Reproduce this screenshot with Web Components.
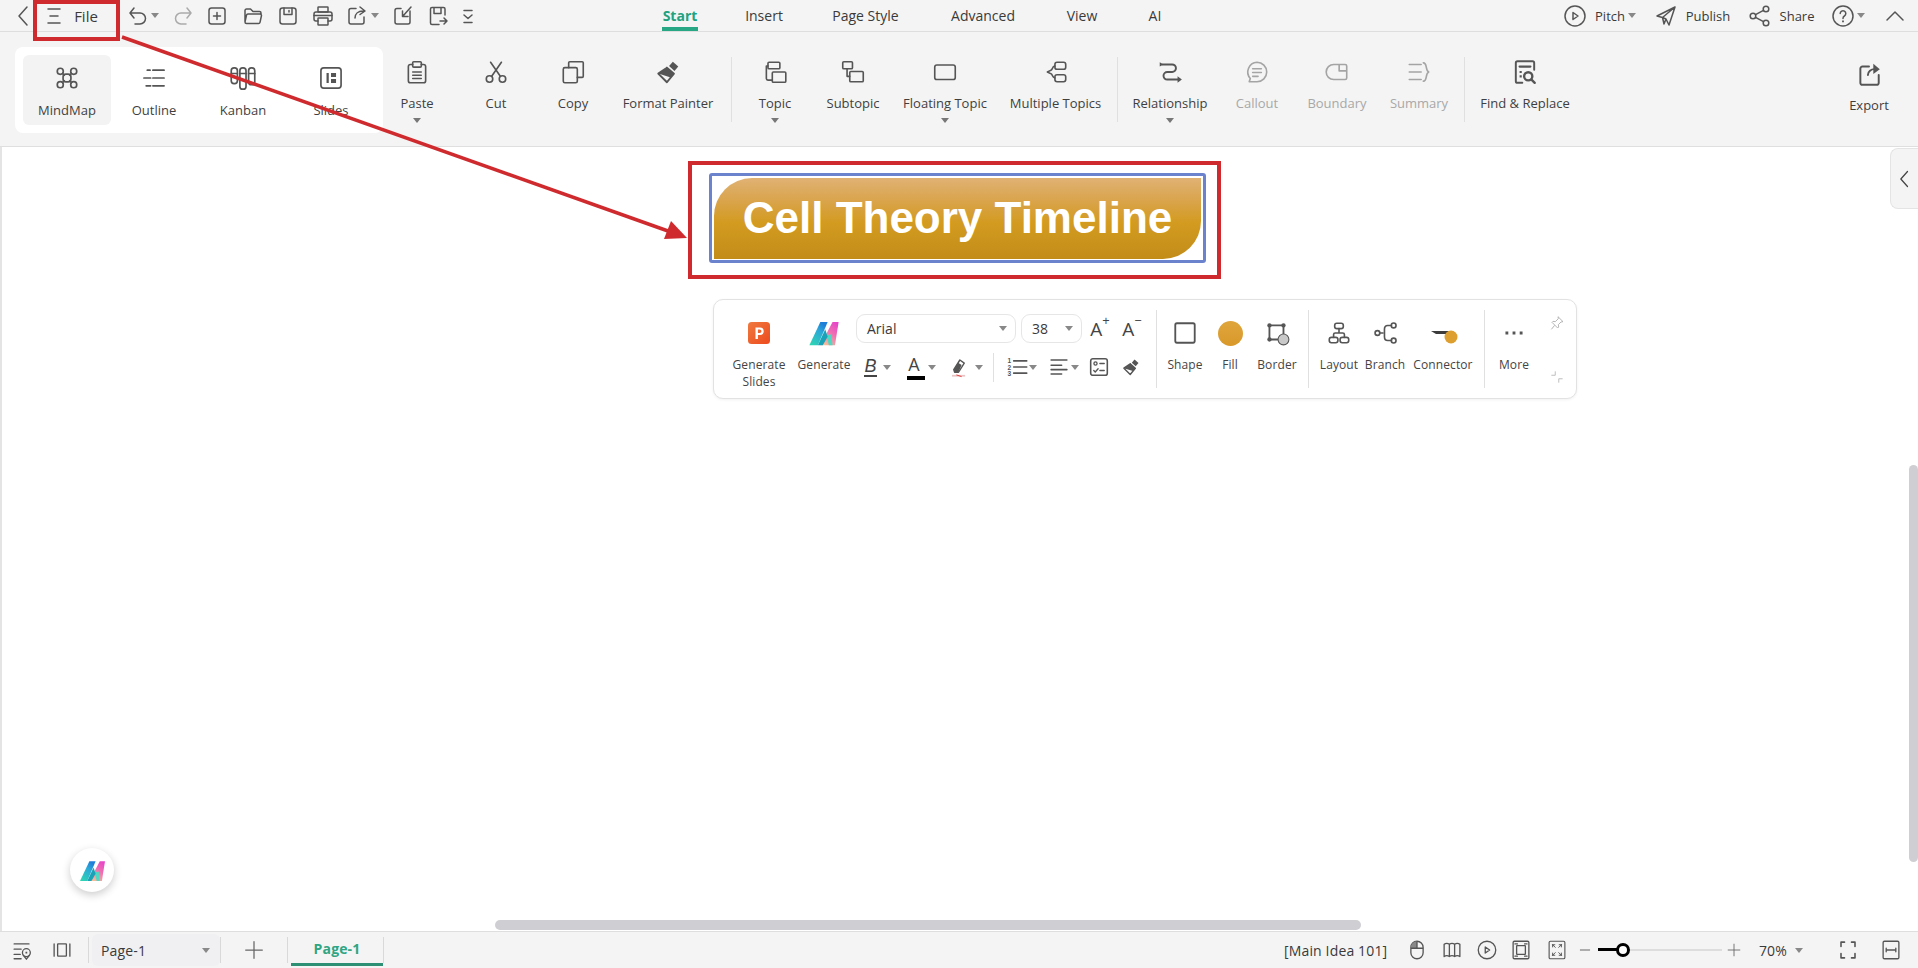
<![CDATA[<!DOCTYPE html>
<html lang="en"><head><meta charset="utf-8"><title>Cell Theory Timeline</title>
<style>
html,body{margin:0;height:100%;overflow:hidden;background:#f4f4f4}
body{font:13px "Open Sans","Noto Sans",sans-serif;color:#3a3a3a}
</style></head><body>
<app-shell></app-shell>
<script>
const L=(d,w=1.5)=>`<path d="${d}" fill="none" stroke="currentColor" stroke-width="${w}" stroke-linecap="round" stroke-linejoin="round"/>`;
const R=(x,y,w,h,r=1.5,sw=1.5)=>`<rect x="${x}" y="${y}" width="${w}" height="${h}" rx="${r}" fill="none" stroke="currentColor" stroke-width="${sw}"/>`;
const C=(x,y,r,sw=1.5)=>`<circle cx="${x}" cy="${y}" r="${r}" fill="none" stroke="currentColor" stroke-width="${sw}"/>`;
const F=(d)=>`<path d="${d}" fill="currentColor"/>`;
const ICONS={
chevL:L('M15 3L7 12l8 9'),chevU:L('M4 16l8-8 8 8'),
menu:L('M6 5h12M8 12h8M6 19h12'),
undo:L('M8 4L4 9l4 5M4 9h10a5.5 5.5 0 0 1 0 11H9'),
redo:L('M16 4l4 5-4 5M20 9H10a5.5 5.5 0 0 0 0 11h5'),
newf:R(4,4,16,16,2.5)+L('M12 8.5v7M8.5 12h7'),
open:L('M4 18V6.500A1.500 1.500 0 0 1 5.500 5h4L12 7.500h6.500A1.500 1.500 0 0 1 20 9v1M4 18a1.500 1.500 0 0 0 1.500 1.500h12a1.500 1.500 0 0 0 1.500-1.200l1.500-6.800a1.500 1.500 0 0 0-1.500-1.500H7a1.500 1.500 0 0 0-1.500 1.200z'),
save:R(4,4,16,16,2.500)+L('M8 4v6.500h8V4M13 6.500v1.500'),
print:R(7,3,10,5,.5)+L('M7 17H5a2 2 0 0 1-2-2v-5a2 2 0 0 1 2-2h14a2 2 0 0 1 2 2v5a2 2 0 0 1-2 2h-2')+R(7,14,10,7,.5)+L('M3 11.500h18'),
shareout:L('M11 4.500H6a2 2 0 0 0-2 2V18a2 2 0 0 0 2 2h11a2 2 0 0 0 2-2v-5M10 14c0-4 3-7 8-7M15 3l5 4-5 3.500'),
importf:L('M10 4.500H6a2 2 0 0 0-2 2V18a2 2 0 0 0 2 2h11a2 2 0 0 0 2-2V7M20 3l-8 9M11.500 7v5.500H17'),
saveas:L('M19 11V5a1.500 1.500 0 0 0-1.500-1.500H6A1.500 1.500 0 0 0 4.500 5v14A1.500 1.500 0 0 0 6 20.500h7M8 3.500v6h7v-6M14 17h7M18 14l3 3-3 3'),
more2:L('M8 6.500h8M8 11l4 3.500 4-3.500M8 18.500h8'),
play:C(12,12,10)+L('M10 8.500l5 3.500-5 3.500z'),
plane:L('M21 3L3 12l5.500 1.500L21 3zM21 3l-6 18-3-6-3.500-1.500M12 15l-2 5-1.500-6.500'),
share:C(18,5,2.800)+C(5,12,2.800)+C(18,19,2.800)+L('M7.500 10.600l8-4.200M7.500 13.400l8 4.200'),
help:C(12,12,10)+L('M9.200 9.500a2.800 2.800 0 1 1 4.200 2.500c-1 .6-1.400 1.200-1.400 2.500')+F('M11.100 16.500h1.800v1.800h-1.800z'),
mindmap:C(6,6,2.700)+C(18,6,2.700)+C(6,18,2.700)+C(18,18,2.700)+L('M8 8l1.500 1.500M16 8l-1.500 1.500M8 16l1.500-1.500M16 16l-1.500-1.500')+R(8.500,8.500,7,7,2.500),
outline:L('M6 5h2.500M11 5h10M3 12h6M11 12h10M5 19h4M11 19h10'),
kanban:R(1.500,3,5.500,14,2.500)+R(9.200,3,5.500,19,2.500)+R(17,3,5.500,15,2.500)+L('M1.500 8h5.500M9.200 8h5.500M17 8h5.500'),
slides:R(3,3,18,18,2.500)+F('M8 7.500h2v9H8zM12 7.500h4.500v3.500H12zM12 13h4.500v3.500H12z'),
paste:L('M8 5H6a2 2 0 0 0-2 2v13a2 2 0 0 0 2 2h12a2 2 0 0 0 2-2V7a2 2 0 0 0-2-2h-2')+R(8,2.500,8,5,1)+L('M8 12h8M8 15h8M8 18h8',1.300),
cut:C(6,18.500,3)+C(18,18.500,3)+L('M8 16L17 3M16 16L7 3'),
copy:R(3,8,13,14,1.500)+L('M8 8V3.500a1 1 0 0 1 1-1h11.500a1 1 0 0 1 1 1V16a1 1 0 0 1-1 1H16'),
painter:F('M16.500 2.500l5 4.500-3.500 4-5-4.500z')+L('M11 8l6.500 5.500-6.500 8L3 13.500z M3 13.500l4-1 4-4.500',1.800)+F('M3 13.500l4-1 4-4.500 6.500 5.500-3 3.500z'),
topic:R(5.500,3,11,6,1)+R(9.500,12,12.500,9.500,1)+L('M5.500 6.500H4V18a1.500 1.500 0 0 0 1.500 1.500h4'),
subtopic:R(2.500,2.500,9,6.500,1)+R(9,11.500,12.500,9.500,1)+L('M6.500 9v7h2.500'),
floating:R(2.500,5.500,19,13.500,2),
multi:R(11,3,10,6.500,2)+R(11,14.500,10,6.500,2)+L('M11 6.500c-3 .5-1.500 3-4 4L4 12l3 1.500c2.500 1 1 3.500 4 4'),
relation:L('M5 5h9a3.500 3.500 0 0 1 0 7H9.500a3.500 3.500 0 0 0 0 7H20',1.800)+F('M2.500 3l3.500 2-3.500 2zM19 16l4 3-4 3z'),
callout:L('M12 3a9 9 0 0 1 0 18H4.800l1-3A9 9 0 0 1 12 3zM8 9h8M8 12.500h8M8 16h5'),
boundary:L('M9 5h10.500A1.500 1.500 0 0 1 21 6.500v11a1.500 1.500 0 0 1-1.500 1.500H9a7 7 0 0 1 0-14zM14 5v6h7'),
summary:L('M3 5h11M3 12h11M3 19h11M16 3.500c4 0 1.500 7 5 8.500-3.500 1.500-1 8.500-5 8.500'),
find:L('M9.500 22H5a1.500 1.500 0 0 1-1.500-1.500v-17A1.500 1.500 0 0 1 5 2h14a1.500 1.500 0 0 1 1.500 1.500V10',1.800)+L('M7 7h10',2)+F('M7 11h2v2H7zM7 15h2v2H7z')+C(15,16,3.800,2.200)+L('M18 19l3 3',2.200),
exportb:L('M12 5H6a2 2 0 0 0-2 2v13a2 2 0 0 0 2 2h13a2 2 0 0 0 2-2v-7',1.800)+L('M11 13c0-3.500 3-5.500 6-5.500',1.800)+F('M16 2.500l6 5-6 4.500z'),
ppt:`<defs><linearGradient id="p" x1="0" y1="0" x2="1" y2="1"><stop offset="0" stop-color="#ee7a3f"/><stop offset="1" stop-color="#ee4a1e"/></linearGradient></defs><rect x="1" y="1" width="22" height="22" rx="3.500" fill="url(#p)"/><path d="M8.500 18V6.500h4.500a3.700 3.700 0 0 1 0 7.500h-2.100v4zm2.400-6h1.800a1.700 1.700 0 0 0 0-3.500h-1.800z" fill="#fff"/>`,
aim:`<defs><linearGradient id="a1" x1="0" y1="1" x2=".6" y2="0"><stop offset="0" stop-color="#2fd9b0"/><stop offset=".7" stop-color="#2ca7d8"/><stop offset="1" stop-color="#1f7fd8"/></linearGradient><linearGradient id="a2" x1=".2" y1="1" x2=".8" y2="0"><stop offset="0" stop-color="#f6c59a"/><stop offset=".6" stop-color="#ee6cb4"/><stop offset="1" stop-color="#e745c8"/></linearGradient></defs><path d="M0 22L9 3h6L7 22z" fill="url(#a1)"/><path d="M9 22L19 3h5l-3 19z" fill="url(#a2)"/><path d="M16 22l-2-8 4-1 1 9z" fill="#4fd9c2"/><path d="M7 22l6-13 2 6-4 7z" fill="#1aa3b8"/>`,
pen:L('M6 15L13 4l5 3.500L11.500 18H7z',1.600)+F('M6 15l5-8 4 2.800L11.500 18H7z')+`<path d="M4 22h15" stroke="#e8c4c4" stroke-width="2"/><path d="M9 21l6 2" stroke="#d33" stroke-width="1"/>`,
numlist:`<text x="0" y="8" font-size="7.500" font-weight="700" font-family="Liberation Sans" fill="currentColor">1</text><text x="0" y="15" font-size="7.500" font-weight="700" font-family="Liberation Sans" fill="currentColor">2</text><text x="0" y="22" font-size="7.500" font-weight="700" font-family="Liberation Sans" fill="currentColor">3</text>`+L('M7 5h15M7 12h15M7 19h15',1.800),
align:L('M3 4h18M3 10h12M3 15h18M3 20h12',1.800),
check:R(2.500,2.500,19,19,2.500,1.800)+C(8,8,1.800)+L('M13 8h5M13 16h5M6 16l1.700 1.700L11 14'),
shape:R(3,3,18,18,1.500,1.700),
border:`<path d="M5 5h13M5 5v13M5 18h8M18 5v8" fill="none" stroke="currentColor" stroke-width="1.700"/><circle cx="5" cy="5" r="2" fill="currentColor"/><circle cx="18" cy="5" r="2" fill="currentColor"/><circle cx="5" cy="18" r="2" fill="currentColor"/><circle cx="18" cy="18" r="5" fill="#c9c9c9" stroke="currentColor" stroke-width="1"/>`,
layout:R(8,3,8,5,2)+R(3,16,8,5,2)+R(13,16,8,5,2)+L('M12 8v4M7 16v-2.500a1.500 1.500 0 0 1 1.500-1.500h7a1.500 1.500 0 0 1 1.500 1.500V16'),
branch:L('M7 12h3M18 5h-3.500c-2 0-3 1.500-3 3.500v7c0 2 1 3.500 3 3.500H18')+`<circle cx="5" cy="12" r="2.200" fill="none" stroke="currentColor" stroke-width="1.500"/><circle cx="20" cy="5" r="2.200" fill="none" stroke="currentColor" stroke-width="1.500"/><circle cx="20" cy="19" r="2.200" fill="none" stroke="currentColor" stroke-width="1.500"/>`,
connector:`<path d="M0 10h21v3H5z" fill="#3c3c3c"/><circle cx="20" cy="16" r="6.500" fill="#dd9f2f"/>`,
dots:F('M3 10.500h3v3H3zM10.500 10.500h3v3h-3zM18 10.500h3v3h-3z'),
pin:L('M14 3l7 7-3 .5-4 4 .5 3.500L13 19.500 4.500 11 6 9.500l3.500.5 4-4zM8 16l-4 5',1.300),
collapse:L('M9 3v6H3M15 21v-6h6',1.300),
pinmap:L('M3 5h17M3 11h8M3 17h7M3 22h8')+C(17,15,4.500)+L('M13.500 18l3.500 4.500 3.500-4.500')+F('M16 14h2v2h-2z'),
pagev:L('M3 5v14M21 5v14')+R(7,5,10,14,.5),
plus:L('M12 2v20M2 12h20'),
mouse:`<rect x="5" y="2" width="14" height="20" rx="7" fill="none" stroke="currentColor" stroke-width="1.500"/><path d="M5 10V9a7 7 0 0 1 7-7v8z" fill="#888"/><path d="M5 10h14M12 2v8" stroke="currentColor" stroke-width="1.500"/>`,
map:L('M3 5.500c2-1.500 4-1.500 6 0 2-1.500 4-1.500 6 0 2-1.500 4-1.500 6 0v14c-2-1.500-4-1.500-6 0-2-1.500-4-1.500-6 0-2-1.500-4-1.500-6 0zM9 5.500v14M15 5.500v14'),
fit:R(3,2,18,20,1.500)+R(7,7,10,10,.5)+L('M5 5h3M19 5h-3M5 19h3M19 19h-3',1.200),
expand:R(3,2,18,20,1.500,1.300)+L('M7 6h2.500M7 6v2.500M7 6l3 3M17 6h-2.500M17 6v2.500M17 6l-3 3M7 18h2.500M7 18v-2.500M7 18l3-3M17 18h-2.500M17 18v-2.500M17 18l-3-3',1.100),
full:L('M8 3H4v5M16 3h4v5M8 21H4v-5M16 21h4v-5',1.800),
fitw:R(3,2,18,20,1.500)+L('M6.500 12h11M6.500 10v4M17.500 10v4',1.500),
minus:L('M5 12h14'),
};
const def=(n,c)=>customElements.define(n,c);
const sr=(el,html)=>{el.attachShadow({mode:'open'}).innerHTML=html};

def('ui-icon',class extends HTMLElement{connectedCallback(){
 const s=this.getAttribute('s')||20,z=this.getAttribute('z')||1;
 sr(this,`<style>:host{display:inline-flex;flex:none;width:${s}px;height:${s}px;color:${this.getAttribute('c')||'#555'}}svg{width:100%;height:100%;display:block;overflow:visible;transform:scale(${z})}</style><svg viewBox="0 0 24 24" aria-hidden="true">${ICONS[this.getAttribute('n')]||''}</svg>`);
}});
def('ui-caret',class extends HTMLElement{connectedCallback(){
 sr(this,`<style>:host{display:inline-block;flex:none;width:0;height:0;border-left:4px solid transparent;border-right:4px solid transparent;border-top:5px solid ${this.getAttribute('c')||'#777'}}</style>`);
}});
def('ui-sep',class extends HTMLElement{connectedCallback(){
 sr(this,`<style>:host{display:block;flex:none;width:1px;background:#e0e0e0}</style>`);
}});
def('top-text',class extends HTMLElement{connectedCallback(){
 sr(this,`<style>:host{display:flex;flex:none;justify-content:center;align-items:center;height:31px;white-space:nowrap;font-size:13px;color:#3a3a3a}</style><slot></slot>`);
}});
def('top-tab',class extends HTMLElement{connectedCallback(){
 const on=this.hasAttribute('active');
 sr(this,`<style>:host{display:flex;flex:none;justify-content:center;height:31px;white-space:nowrap;font-size:14px;color:${on?'#23a27f':'#3a3a3a'};font-weight:${on?700:400}}
 span{display:block;padding:0 1px;line-height:31px;height:31px;box-sizing:border-box;border-bottom:4px solid ${on?'#27a783':'transparent'};margin-top:0}</style><span><slot></slot></span>`);
}});
def('top-bar',class extends HTMLElement{connectedCallback(){
 const ic=(n,ml,c)=>`<ui-icon n="${n}" s="20" z="1.2" style="margin-left:${ml}px"${c?` c="${c}"`:''}></ui-icon>`;
 const ca=(ml)=>`<ui-caret style="margin-left:${ml}px" c="#888"></ui-caret>`;
 sr(this,`<style>:host{display:flex;flex:none;align-items:center;height:31px;border-bottom:1px solid #dedede;background:#f4f4f4;padding-left:14px;padding-right:13px}
 .r{margin-left:auto;display:flex;align-items:center}</style>
 ${ic('chevL',0)}${ic('menu',10)}<top-text style="width:22px;margin-left:11px;font-size:15px">File</top-text>
 ${ic('undo',31)}${ca(3)}${ic('redo',14,'#aaa')}${ic('newf',14)}${ic('open',16)}${ic('save',15)}${ic('print',15)}${ic('shareout',14)}${ca(4)}${ic('importf',14)}${ic('saveas',15)}${ic('more2',10)}
 <top-tab active style="width:60px;margin-left:172px">Start</top-tab><top-tab style="width:108px">Insert</top-tab><top-tab style="width:95px">Page Style</top-tab><top-tab style="width:140px">Advanced</top-tab><top-tab style="width:58px">View</top-tab><top-tab style="width:88px">AI</top-tab>
 <div class="r">${ic('play',0)}<top-text style="width:30px;margin-left:10px">Pitch</top-text>${ca(3)}${ic('plane',20)}<top-text style="width:44px;margin-left:10px">Publish</top-text>${ic('share',20)}<top-text style="width:38px;margin-left:8px">Share</top-text>${ic('help',17)}${ca(4)}${ic('chevU',20)}</div>`);
}});
def('mode-item',class extends HTMLElement{connectedCallback(){
 const on=this.hasAttribute('active');
 sr(this,`<style>:host{display:flex;flex:none;flex-direction:column;align-items:center;box-sizing:border-box;height:70px;padding-top:11px;border-radius:6px;background:${on?'#f3f3f3':'transparent'};font-size:13px;color:#3f3f3f;white-space:nowrap}
 div{margin-top:11px;line-height:18px}</style><ui-icon n="${this.getAttribute('i')}" s="24" z="1.12"></ui-icon><div>${this.getAttribute('t')}</div>`);
}});
def('rb-item',class extends HTMLElement{connectedCallback(){
 const dis=this.hasAttribute('off');
 sr(this,`<style>:host{display:flex;flex:none;flex-direction:column;align-items:center;padding-top:28px;font-size:13px;color:${dis?'#a8a8a8':'#3f3f3f'};white-space:nowrap}
 div{margin-top:10px;line-height:18px}ui-caret{margin-top:6px}</style><ui-icon n="${this.getAttribute('i')}" s="24" z="1.08" c="${dis?'#a4a4a4':'#555'}"></ui-icon><div>${this.getAttribute('t')}</div>${this.hasAttribute('caret')?'<ui-caret></ui-caret>':''}`);
}});
def('main-ribbon',class extends HTMLElement{connectedCallback(){
 const it=(t,i,w,x='')=>`<rb-item t="${t}" i="${i}" style="width:${w}px" ${x}></rb-item>`;
 sr(this,`<style>:host{display:flex;flex:none;height:114px;border-bottom:1px solid #dfdfdf;background:#f4f4f4;padding-left:15px;padding-right:19px}
 .card{display:flex;flex:none;align-self:flex-start;margin-top:15px;width:368px;height:86px;box-sizing:border-box;padding:8px 10px 8px 8px;background:#fff;border-radius:8px}
 ui-sep{margin-top:25px;height:65px}.sp{flex:1}</style>
 <div class="card"><mode-item active t="MindMap" i="mindmap" style="width:88px"></mode-item><mode-item t="Outline" i="outline" style="width:86px"></mode-item><mode-item t="Kanban" i="kanban" style="width:92px"></mode-item><mode-item t="Slides" i="slides" style="width:84px"></mode-item></div>
 ${it('Paste','paste',68,'caret')}${it('Cut','cut',90)}${it('Copy','copy',64)}${it('Format Painter','painter',126)}<ui-sep></ui-sep>
 ${it('Topic','topic',86,'caret')}${it('Subtopic','subtopic',70)}${it('Floating Topic','floating',114,'caret')}${it('Multiple Topics','multi',107)}<ui-sep style="margin-left:8px"></ui-sep>
 ${it('Relationship','relation',104,'caret')}${it('Callout','callout',70,'off')}${it('Boundary','boundary',90,'off')}${it('Summary','summary',74,'off')}<ui-sep style="margin-left:8px"></ui-sep>
 ${it('Find &amp; Replace','find',120)}<div class="sp"></div><rb-item t="Export" i="exportb" style="width:60px;padding-top:30px"></rb-item>`);
}});
def('central-topic',class extends HTMLElement{connectedCallback(){
 sr(this,`<style>:host{position:absolute;left:709px;top:26px;width:497px;height:90px;box-sizing:border-box;border:3px solid #6b83cd;border-radius:3px;padding:2px 2px 1px 2px;background:#fff}
 div{height:100%;box-sizing:border-box;padding-bottom:2px;display:flex;align-items:center;justify-content:center;background:linear-gradient(#e0b274 0,#d9a349 30%,#d39b20 55%,#c28c18 100%);border-radius:38px 0 38px 0;color:#fff;font:700 44px/1 "Liberation Sans",Arial,sans-serif;white-space:nowrap}</style><div><slot></slot></div>`);
}});
def('fl-item',class extends HTMLElement{connectedCallback(){
 const lb=this.getAttribute('t');
 sr(this,`<style>:host{display:flex;flex:none;flex-direction:column;align-items:center;padding-top:11px;font-size:12px;letter-spacing:.1px;color:#444;white-space:nowrap;text-align:center}
 div{margin-top:11px;line-height:17px}.f{width:25px;height:25px;margin-bottom:-1px;border-radius:50%;background-image:linear-gradient(#dfa53c,#d9992a)}</style>
 ${this.getAttribute('i')==='fill'?'<span class="f"></span>':`<ui-icon n="${this.getAttribute('i')}" s="24" z="${this.getAttribute('z')||1.08}"></ui-icon>`}<div>${lb}</div>`);
}});
def('sel-box',class extends HTMLElement{connectedCallback(){
 sr(this,`<style>:host{display:flex;flex:none;align-items:center;box-sizing:border-box;height:29px;border:1px solid #e6e6e6;border-radius:9px;padding:0 8px 0 10px;font-size:14px;color:#3a3a3a;background:#fff}
 span{flex:1}</style><span><slot></slot></span><ui-caret c="#888"></ui-caret>`);
}});
def('float-toolbar',class extends HTMLElement{connectedCallback(){
 const it=(t,i,w,ml=0,z='')=>`<fl-item t="${t}" i="${i}" style="width:${w}px;margin-left:${ml}px" ${z?`z="${z}"`:''}></fl-item>`;
 const ca=(ml)=>`<ui-caret style="margin-left:${ml}px" c="#888"></ui-caret>`;
 const ic=(n,ml,s=20)=>`<ui-icon n="${n}" s="${s}" z="1.05" style="margin-left:${ml}px"></ui-icon>`;
 sr(this,`<style>:host{position:absolute;left:713px;top:152px;width:864px;height:100px;box-sizing:border-box;display:flex;padding:10px 0 10px 12px;background:#fff;border:1px solid #e2e2e2;border-radius:10px;box-shadow:0 1px 3px rgba(0,0,0,.06)}
 ui-sep{align-self:stretch}
 .col{display:flex;flex-direction:column;flex:none;width:300px;padding-top:4px;box-sizing:border-box}
 .row{display:flex;align-items:center;flex:none}.r2{margin-top:9px;height:30px}
 .a{width:32px;display:flex;justify-content:center;font-size:19px;color:#444;line-height:24px}
 sup{font-size:13px;line-height:14px;margin:-4px 0 0 0;height:14px}
 .bt{width:13px;margin:0 3px 0 8px;text-align:center;font:italic 400 18px/18px "Liberation Sans",sans-serif;color:#444;border-bottom:2px solid #444}
 .ct{width:20px;margin-left:13px;text-align:center;font-size:18px;line-height:19px;color:#444;display:flex;flex-direction:column;align-items:center}
 .ct i{display:block;width:18px;height:4px;background:#000;margin:2px 0 0 3px}
 .s2{height:29px;align-self:center}
 .pin{display:flex;flex-direction:column;align-items:center;justify-content:space-between;width:28px;padding:5px 0 4px;box-sizing:border-box}</style>
 ${it('Generate<br>Slides','ppt',66,0,1)}${it('Generate','aim',64,0,1.22)}
 <div class="col"><div class="row"><sel-box style="width:160px">Arial</sel-box><sel-box style="width:61px;margin-left:5px">38</sel-box><span class="a" style="margin-left:2px">A<sup>+</sup></span><span class="a">A<sup>−</sup></span></div>
 <div class="row r2"><span class="bt">B</span>${ca(3)}<span class="ct">A<i></i></span>${ca(4)}${ic('pen',13)}${ca(6)}<ui-sep class="s2" style="margin-left:10px"></ui-sep>${ic('numlist',14)}${ca(1)}${ic('align',12)}${ca(2)}${ic('check',10)}${ic('painter',13,18)}</div></div>
 <ui-sep></ui-sep>${it('Shape','shape',56)}${it('Fill','fill',34)}${it('Border','border',60)}<ui-sep style="margin-left:1px"></ui-sep>
 ${it('Layout','layout',48,6)}${it('Branch','branch',44)}${it('Connector','connector',72,0,1)}<ui-sep style="margin-left:5px"></ui-sep>${it('More','dots',58,0,.95)}
 <div class="pin"><ui-icon n="pin" s="16" c="#aaa"></ui-icon><ui-icon n="collapse" s="14" c="#aaa"></ui-icon></div>`);
}});
def('ai-fab',class extends HTMLElement{connectedCallback(){
 sr(this,`<style>:host{position:absolute;left:71px;bottom:39px;width:44px;height:44px;border-radius:50%;background:#fff;box-shadow:0 3px 8px rgba(0,0,0,.2);display:flex;align-items:center;justify-content:center}</style><ui-icon n="aim" s="25"></ui-icon>`);
}});
def('canvas-area',class extends HTMLElement{connectedCallback(){
 sr(this,`<style>:host{display:block;position:relative;flex:1;background:#fff;border-left:2px solid #e4e4e4;overflow:hidden}
 .panel{position:absolute;right:0;top:1px;width:28px;height:61px;background:#f4f4f4;border:1px solid #e4e4e4;border-right:0;border-radius:8px 0 0 8px;display:flex;align-items:center;justify-content:center;box-sizing:border-box}
 .vs{position:absolute;right:0;top:318px;width:9px;height:397px;background:#cfcfd3;border-radius:5px}
 .hs{position:absolute;left:493px;bottom:1px;width:866px;height:10px;background:#cfcfd3;border-radius:5px}</style>
 <central-topic style="left:707px">Cell Theory Timeline</central-topic>
 <float-toolbar style="left:711px"></float-toolbar>
 <div class="panel"><ui-icon n="chevL" s="20" c="#444"></ui-icon></div><div class="vs"></div><div class="hs"></div><ai-fab style="left:68px"></ai-fab>`);
}});
def('status-bar',class extends HTMLElement{connectedCallback(){
 const ic=(n,ml,s=20,c='',z=1.05)=>`<ui-icon n="${n}" s="${s}" z="${z}" style="margin-left:${ml}px"${c?` c="${c}"`:''}></ui-icon>`;
 sr(this,`<style>:host{display:flex;flex:none;align-items:center;height:37px;box-sizing:border-box;border-top:1px solid #dedede;background:#f4f4f4;padding-left:12px;padding-right:17px;font-size:14px;letter-spacing:.15px;color:#3a3a3a;position:relative}
 ui-sep{height:26px;background:#d9d9d9}
 .sel{display:flex;align-items:center;width:128px;height:32px;margin-left:3px;padding:0 10px 0 9px;box-sizing:border-box;background:#f0f0f2;border-radius:6px;justify-content:space-between}
 .tab{width:92px;height:33px;margin:0 0 1px 3px;box-sizing:border-box;border-bottom:3px solid #2d8f73;color:#2fa583;font-weight:700;display:flex;align-items:center;justify-content:center}
 .r{margin-left:auto;display:flex;align-items:center}
 .idea{white-space:nowrap;width:104px;display:block;position:relative}
 .pg{position:absolute;left:0;right:-3px;bottom:-11px;height:3px;background:#dcdcdc;border-left:3px solid #2fb388}
 .sl{position:relative;width:124px;height:2px;background:#ddd;margin-left:5px;flex:none}
 .sl i{position:absolute;left:0;top:-1px;width:25px;height:3px;background:#000}
 .sl b{position:absolute;left:18px;top:-6px;width:14px;height:14px;box-sizing:border-box;border:3px solid #000;border-radius:50%;background:#fff}
 .z{margin-left:17px;width:30px;text-align:center;white-space:nowrap}</style>
 ${ic('pinmap',0)}${ic('pagev',20)}<ui-sep style="margin-left:16px"></ui-sep><div class="sel"><span>Page-1</span><ui-caret c="#888"></ui-caret></div><ui-sep></ui-sep>${ic('plus',23,20,'#666',1)}<ui-sep style="margin-left:23px"></ui-sep><div class="tab">Page-1</div><ui-sep></ui-sep>
 <div class="r"><span class="idea">[Main Idea 101]<span class="pg"></span></span>${ic('mouse',19)}${ic('map',15)}${ic('play',15)}${ic('fit',14)}${ic('expand',16)}${ic('minus',10,16,'#666',1)}<span class="sl"><i></i><b></b></span>${ic('plus',5,14,'#666',1)}<span class="z">70%</span><ui-caret c="#888" style="margin-left:7px"></ui-caret>${ic('full',35)}${ic('fitw',23)}</div>`);
}});
def('annotation-layer',class extends HTMLElement{connectedCallback(){
 sr(this,`<style>:host{position:absolute;inset:0;pointer-events:none}svg{display:block;width:100%;height:100%}</style>
 <svg viewBox="0 0 1918 968"><g fill="none" stroke="#cf2a2d" stroke-width="4"><rect x="35" y="2" width="83" height="37"/><rect x="690" y="163" width="529" height="114"/><path d="M122 37L668 231" stroke-width="3.500"/></g><path d="M687 238L664 239L671 221z" fill="#cf2a2d"/></svg>`);
}});
def('app-shell',class extends HTMLElement{connectedCallback(){
 sr(this,`<style>:host{display:flex;flex-direction:column;position:relative;width:1918px;height:968px;overflow:hidden}</style><top-bar></top-bar><main-ribbon></main-ribbon><canvas-area></canvas-area><status-bar></status-bar><annotation-layer></annotation-layer>`);
}});
</script></body></html>]]>
